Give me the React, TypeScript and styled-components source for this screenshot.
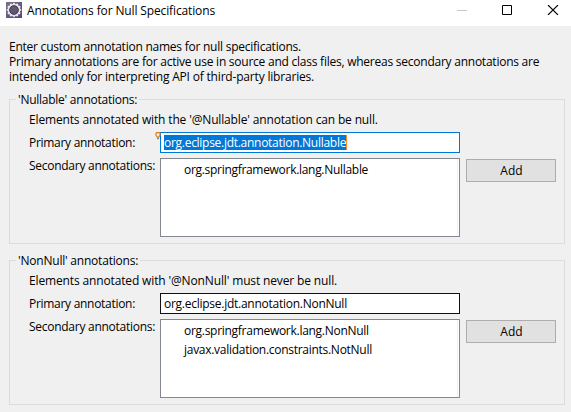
import React from 'react';
import styled, { createGlobalStyle } from 'styled-components';

const GlobalStyle = createGlobalStyle`
  * { box-sizing: border-box; }
  body {
    margin: 0;
    background: #f0f0f0;
    color: #000;
    font: 12px/15px "Open Sans", "Noto Sans", sans-serif;
  }
`;

const Dialog = styled.main`
  width: 571px;
  height: 412px;
  overflow: hidden;
  background: #f0f0f0;
`;

const TitleBar = styled.header`
  display: flex;
  height: 26px;
  padding: 2px 12px 0 6px;
  background: #fff;
`;

const Title = styled.h1`
  flex: 1;
  margin: 1px 0 0 5px;
  font: inherit;
`;

const WindowButtons = styled.div`
  display: flex;
  gap: 35px;
  padding-top: 3px;

  svg { display: block; }
`;

const Text = styled.span<{ $spacing: number }>`
  display: block;
  white-space: pre;
  letter-spacing: ${(p) => p.$spacing}px;
`;

const Intro = styled.section`
  padding: 13px 0 0 9px;
`;

const Group = styled.section`
  width: 556px;
  height: 145px;
  margin: 15px 0 0 9px;
  border: 1px solid #dcdcdc;

  & + & { margin-top: 16px; }
`;

const Legend = styled.div`
  width: max-content;
  margin: -8px 0 5px 6px;
  padding: 0 2px;
  background: #f0f0f0;
`;

const Description = styled.div`
  margin-left: 19px;
`;

const Form = styled.div`
  display: grid;
  grid-template-columns: 125px 300px 90px;
  grid-template-rows: 21px 79px;
  gap: 5px 6px;
  margin: 5px 0 0 19px;
`;

const Label = styled.div<{ $top?: number }>`
  grid-column: 1;
  padding-top: ${(p) => p.$top ?? 0}px;
`;

const Field = styled.div<{ $focused?: boolean }>`
  position: relative;
  display: flex;
  grid-column: 2;
  padding: 2px 3px;
  border: 1px solid ${(p) => (p.$focused ? '#0078d7' : '#111')};
  background: #fff;
`;

const Selection = styled.div`
  width: 183px;
  border-right: 1px solid #ff8728;
  background: #0078d7;
  color: #fff;
`;

const Hint = styled.svg`
  position: absolute;
  left: -6px;
  top: -1px;
`;

const List = styled.div`
  display: flex;
  flex-direction: column;
  gap: 4px;
  grid-column: 2;
  padding: 3px 0 0 23px;
  border: 1px solid #828790;
  background: #fff;
  box-shadow: inset -1px 0 #fff, inset -2px 0 #eef0f2;
`;

const AddButton = styled.button`
  display: flex;
  justify-content: center;
  height: 23px;
  margin: 1px 0 0;
  padding: 3px 0 0 1px;
  border: 1px solid #adadad;
  background: #e1e1e1;
  color: #000;
  font: inherit;
`;

const teeth = Array.from({ length: 12 }, (_, i) => i * 30);

const GearIcon = () => (
  <svg width="16" height="16" viewBox="0 0 16 16">
    <defs>
      <linearGradient id="tile" x1="0" y1="0" x2="1" y2="1">
        <stop offset="0" stopColor="#77718c" />
        <stop offset="1" stopColor="#56447b" />
      </linearGradient>
    </defs>
    <rect width="16" height="16" fill="url(#tile)" />
    {teeth.map((a) => (
      <rect key={a} x="7.1" y="0.8" width="1.8" height="3" fill="#ece9ee" transform={`rotate(${a} 8 8)`} />
    ))}
    <circle cx="8" cy="8" r="5.4" fill="#3d3156" stroke="#e6e3e6" strokeWidth="1.8" />
    <circle cx="8" cy="8" r="4.3" fill="#625673" stroke="#352b45" strokeWidth="0.7" />
  </svg>
);

const BulbIcon = () => (
  <Hint width="6" height="8" viewBox="0 0 6 8">
    <path d="M1 1.2C1 .3 5 .3 5 1.2v2L4 5H2L1 3.2Z" fill="#fff0d2" stroke="#d97b20" strokeWidth="1.2" />
    <path d="M2 5.5h2v1.7H2Z" fill="#8b8177" />
  </Hint>
);

interface Line {
  text: string;
  spacing: number;
}

interface GroupProps {
  legend: Line;
  description: Line;
  primary: Line;
  secondary: Line[];
  selected?: boolean;
}

const Copy = ({ text, spacing }: Line) => <Text $spacing={spacing}>{text}</Text>;

const AnnotationGroup = ({ legend, description, primary, secondary, selected }: GroupProps) => (
  <Group>
    <Legend><Copy {...legend} /></Legend>
    <Description><Copy {...description} /></Description>
    <Form>
      <Label $top={3}><Copy text="Primary annotation:" spacing={-0.29} /></Label>
      <Field $focused={selected}>
        {selected && <BulbIcon />}
        {selected ? <Selection><Copy {...primary} /></Selection> : <Copy {...primary} />}
      </Field>
      <Label><Copy text="Secondary annotations:" spacing={-0.27} /></Label>
      <List>{secondary.map((item) => <Copy key={item.text} {...item} />)}</List>
      <AddButton><Copy text="Add" spacing={0} /></AddButton>
    </Form>
  </Group>
);

export default function App() {
  return (
    <Dialog>
      <GlobalStyle />
      <TitleBar>
        <GearIcon />
        <Title><Copy text="Annotations for Null Specifications" spacing={-0.13} /></Title>
        <WindowButtons>
          <svg width="10" height="10"><path d="M0 5.5h10" stroke="#c8c8c8" /></svg>
          <svg width="10" height="10"><path d="M.5.5h9v9h-9Z" fill="none" stroke="#000" /></svg>
          <svg width="12" height="10"><path d="M1 0l10 10M11 0L1 10" stroke="#000" strokeWidth="1.1" /></svg>
        </WindowButtons>
      </TitleBar>
      <Intro>
        <Copy text="Enter custom annotation names for null specifications." spacing={-0.24} />
        <Copy text="Primary annotations are for active use in source and class files, whereas secondary annotations are" spacing={-0.24} />
        <Copy text="intended only for interpreting API of third-party libraries." spacing={-0.185} />
      </Intro>
      <AnnotationGroup
        selected
        legend={{ text: "'Nullable' annotations:", spacing: -0.25 }}
        description={{ text: "Elements annotated with the '@Nullable' annotation can be null.", spacing: -0.15 }}
        primary={{ text: 'org.eclipse.jdt.annotation.Nullable', spacing: -0.28 }}
        secondary={[{ text: 'org.springframework.lang.Nullable', spacing: -0.3 }]}
      />
      <AnnotationGroup
        legend={{ text: "'NonNull' annotations:", spacing: -0.21 }}
        description={{ text: "Elements annotated with '@NonNull' must never be null.", spacing: -0.14 }}
        primary={{ text: 'org.eclipse.jdt.annotation.NonNull', spacing: -0.26 }}
        secondary={[
          { text: 'org.springframework.lang.NonNull', spacing: -0.28 },
          { text: 'javax.validation.constraints.NotNull', spacing: -0.28 },
        ]}
      />
    </Dialog>
  );
}
